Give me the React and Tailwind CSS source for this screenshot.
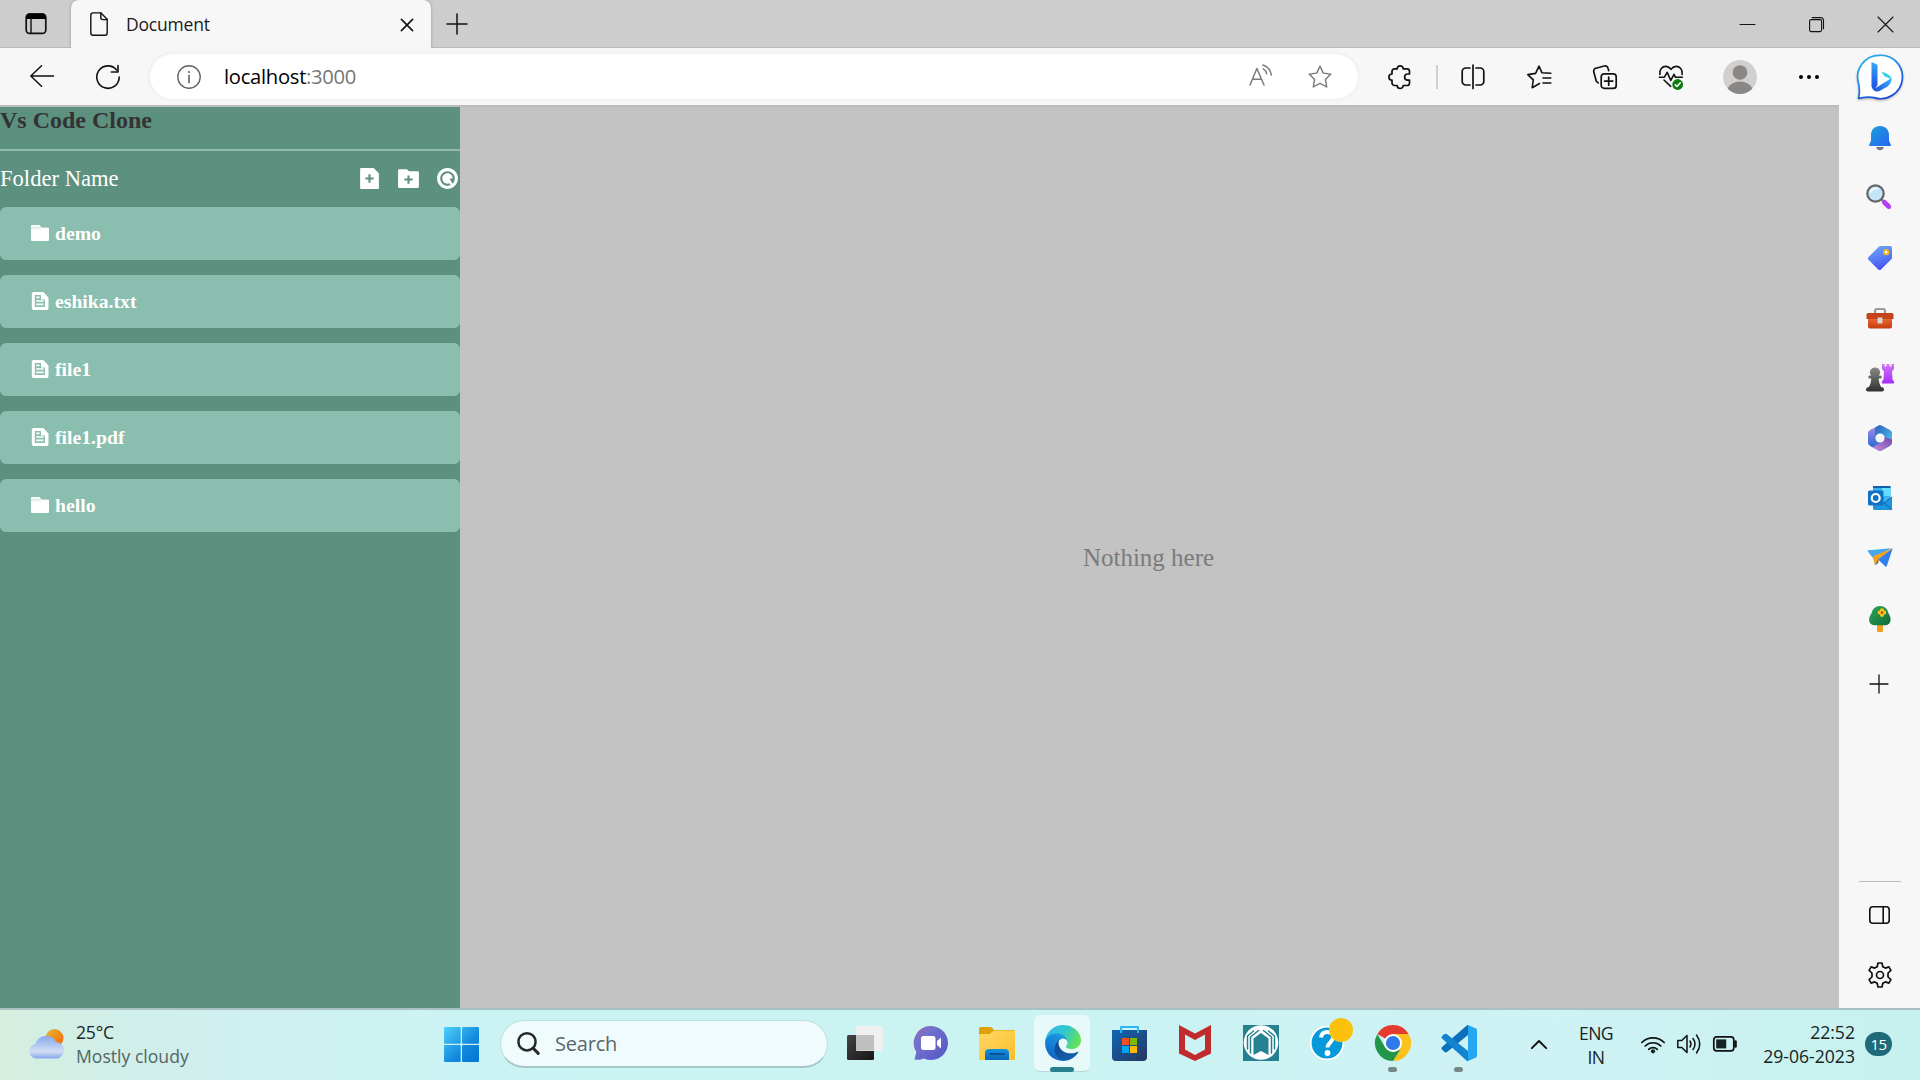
import React from "react";
import { RiFileAddFill, RiFolderAddFill, RiRestartFill } from "react-icons/ri";

const ui = "font-['Open_Sans','Noto_Sans',sans-serif]";
const serif = "font-['Liberation_Serif','Times_New_Roman',serif]";

function Ico({ s = 24, w, h, vb, sw = 1.3, c = "#111", children, className = "" }) {
  const W = w || s;
  const H = h || s;
  return (
    <svg
      width={W}
      height={H}
      viewBox={vb || `0 0 ${W} ${H}`}
      fill="none"
      stroke={c}
      strokeWidth={sw}
      strokeLinecap="round"
      strokeLinejoin="round"
      className={"block shrink-0 overflow-visible " + className}
    >
      {children}
    </svg>
  );
}

/* ---------- tab strip ---------- */
function TabStrip() {
  return (
    <div className="flex h-12 shrink-0 items-end bg-[#cdcdcd] shadow-[inset_0_-1px_0_#b9b9b9]">
      <div className="flex h-12 w-[71px] items-center pl-[25px]">
        <Ico w={22} h={22} sw={1.7}>
          <rect x="1.2" y="1.2" width="19.6" height="19.2" rx="3.4" />
          <path d="M1 6V4a3.5 3.5 0 0 1 3.5-3.5h13A3.5 3.5 0 0 1 21 4v2z" fill="#000" stroke="none" />
          <path d="M6 6v14" strokeWidth="1.4" />
        </Ico>
      </div>
      <div className="flex h-12 w-[360px] items-center rounded-t-[8px] bg-[#f7f7f7] pl-[19px] pr-[18px] shadow-[0_0_3px_rgba(0,0,0,0.3)] [clip-path:inset(-1px_-4px_0_-4px)]">
        <Ico w={18} h={24} sw={1.4}>
          <path d="M3 .9h8l6.2 6.4V21a2.2 2.2 0 0 1-2.2 2.2H3A2.2 2.2 0 0 1 .8 21V3.1A2.2 2.2 0 0 1 3 .9z" />
          <path d="M10.8 1v4.6c0 1.2.8 2 2 2h4.2" />
        </Ico>
        <div className={ui + " ml-[18px] flex-1 text-[17.5px] tracking-[-0.2px] text-[#1b1b1b]"}>Document</div>
        <Ico w={12} h={12} sw={1.6} className="mt-px">
          <path d="M.4.4l11.2 11.2M11.6.4L.4 11.6" />
        </Ico>
      </div>
      <div className="flex h-12 flex-1 items-center pl-[16px]">
        <Ico w={20} h={20} sw={1.5} className="-mt-px">
          <path d="M10 0v20M0 10h20" />
        </Ico>
      </div>
      <div className="flex h-12 items-center pr-[27px]">
        <Ico w={15} h={15} sw={1.1}><path d="M0 7.5h15" /></Ico>
        <Ico w={15} h={15} sw={1.1} className="ml-[54px]">
          <rect x=".6" y="2.6" width="12" height="12" rx="1.6" />
          <path d="M3.2.6h8.6a2.7 2.7 0 0 1 2.7 2.7v8.4" />
        </Ico>
        <Ico w={15} h={15} sw={1.1} className="ml-[54px]"><path d="M0 0l15 15M15 0L0 15" /></Ico>
      </div>
    </div>
  );
}

const STAR = "M12 1.2l3.3 6.9 7.5 1-5.4 5.3 1.3 7.6-6.7-3.6L5.3 22l1.3-7.6L1.2 9.1l7.5-1z";

function Slot({ children, w = "w-[66px]" }) {
  return <div className={"flex shrink-0 items-center justify-center " + w}>{children}</div>;
}

function Toolbar() {
  return (
    <div className="flex h-[57px] shrink-0 items-center bg-[#f7f7f7]">
      <div className="flex w-[150px] shrink-0 items-center pl-[9px]">
        <Slot>
          <Ico w={24} h={22} sw={1.5} className="-mt-px"><path d="M23.500 11H.8M11.500 .8L.8 11l10.700 10.200" /></Ico>
        </Slot>
        <Slot>
          <Ico w={24} h={24} sw={1.6}>
            <path d="M23.200 12A11.200 11.200 0 1 1 20.600 4.900" />
            <path d="M22 .6v6.400h-6.600" />
          </Ico>
        </Slot>
      </div>
      <div className="flex h-[45px] w-[1208px] shrink-0 items-center rounded-full bg-white pl-[27px] pr-[26px] shadow-[0_0_5px_rgba(0,0,0,0.07)]">
        <Ico s={24} c="#666" sw={1.4}>
          <circle cx="12" cy="12" r="11.2" />
          <path d="M12 10.500v7" strokeWidth="1.7" />
          <circle cx="12" cy="7" r="1.100" fill="#666" stroke="none" />
        </Ico>
        <div className={ui + " ml-[23px] flex-1 text-[20.2px] tracking-[-0.28px] text-black"}>
          localhost<span className="text-[#767676]">:3000</span>
        </div>
        <Ico w={24} h={22} c="#7a7a7a" sw={1.5} className="-mt-[3px] mr-[35px]">
          <path d="M1 21L7.900 4.500 15 21M3.600 15.300h8.700" />
          <path d="M14.300 4.800c1.800 1 3 2.800 3.300 5M13.800 1c4.400 1 7.400 4.700 8.600 10" strokeWidth="1.400" />
        </Ico>
        <Ico s={24} c="#767676" sw={1.4}><path d={STAR} /></Ico>
      </div>
      <div className="flex w-[80px] shrink-0 items-center pl-[31px]">
        <Ico w={22} h={24} sw={1.7}>
          <path d="M5.500 3.800H8.200a3 3 0 0 1 6 0H18a2.500 2.500 0 0 1 2.500 2.500V9h-1.800a3 3 0 0 0 0 6.200h1.800v2.800A2.500 2.500 0 0 1 18 20.500h-3.800a3 3 0 0 1-6 0H5.500A2.500 2.500 0 0 1 3 18v-2.800a3 3 0 0 1 0-6.200V6.300A2.500 2.500 0 0 1 5.500 3.800z" />
        </Ico>
        <div className="ml-[25px] h-6 w-[2px] bg-[#d0d0d0]" />
      </div>
      <div className="flex shrink-0 pl-[2px]">
        <Slot>
          <Ico w={24} h={24} sw={1.7}>
            <path d="M9 3H4.800A3.500 3.500 0 0 0 1.200 6.500v10A3.500 3.500 0 0 0 4.800 20H9M15 3h4.200a3.500 3.500 0 0 1 3.600 3.500v10a3.500 3.500 0 0 1-3.600 3.500H15M12 0v23.500" />
          </Ico>
        </Slot>
        <Slot>
          <Ico w={24} h={24} sw={1.6}>
            <path d="M12.500 18.500L5.200 22.700 6.300 14.900.8 9.600 8.600 8.400 12 1.200l3 6.600 8.800.4M16 13h7.800M16 18h7.800" />
          </Ico>
        </Slot>
        <Slot>
          <Ico w={24} h={24} sw={1.7}>
            <rect x="8.200" y="8.800" width="15" height="14.600" rx="3" />
            <path d="M15.700 12v8.200M11.600 16.100h8.200M15.700 5.600L15 3.200A3 3 0 0 0 11.300 1L3 3.200A3 3 0 0 0 .8 7l2.500 9.200 1.900 1.800" />
          </Ico>
        </Slot>
        <Slot>
          <Ico w={24} h={24} sw={1.600}>
            <path d="M.9 9.500C0 4.500 3.500 1.400 6.800 1.400c2.400 0 3.900 1.200 5.200 2.900 1.300-1.700 2.800-2.900 5.200-2.900 3.300 0 6.800 3.100 5.900 8.100M.4 12.300h4.800l3-5 3.600 8 3.200-6 1.600 3h6.800M5 15l6.700 6.300" />
            <circle cx="18.700" cy="19.500" r="5.400" fill="#107c10" stroke="none" />
            <path d="M16.200 19.800l1.700 1.700 3.400-3.700" stroke="#fff" strokeWidth="1.500" />
          </Ico>
        </Slot>
      </div>
      <div className="ml-[19px] flex shrink-0 items-center">
        <Ico s={34} sw={0}>
          <clipPath id="av"><circle cx="17" cy="17" r="17" /></clipPath>
          <circle cx="17" cy="17" r="17" fill="#d2d0ce" />
          <g clipPath="url(#av)" fill="#8a8886">
            <circle cx="17" cy="12.500" r="7.300" />
            <ellipse cx="17" cy="32" rx="13" ry="10.500" />
          </g>
        </Ico>
        <Ico w={20} h={4} sw={0} className="ml-[42px]">
          <g fill="#000"><circle cx="2" cy="2" r="2" /><circle cx="10" cy="2" r="2" /><circle cx="18" cy="2" r="2" /></g>
        </Ico>
        <Ico s={46} sw={0} className="ml-[38px] drop-shadow-[0_1px_1px_rgba(0,0,0,0.3)]">
          <defs>
            <linearGradient id="bb" x1="0" y1="0" x2=".6" y2="1"><stop offset="0" stopColor="#24c1ee" /><stop offset="1" stopColor="#1b48d8" /></linearGradient>
            <linearGradient id="b1" x1="0" y1="0" x2="0" y2="1"><stop offset="0" stopColor="#38a8fb" /><stop offset="1" stopColor="#1a4fe0" /></linearGradient>
            <linearGradient id="b2" x1="1" y1="0" x2="0" y2="1"><stop offset="0" stopColor="#37bdff" /><stop offset="1" stopColor="#1a44dc" /></linearGradient>
          </defs>
          <path d="M22.500 1.300a21.700 21.700 0 1 1-5.500 42.300c-4.500-1.200-8-.8-15.500.8C3.300 38 2.400 34 1.500 29A21.700 21.700 0 0 1 22.500 1.300z" fill="#fff" stroke="url(#bb)" strokeWidth="1.700" />
          <path d="M14.500 8l5 2.200c.8.400 1 1 1 1.800v19c-1.500 3-4 5.500-6 1z" fill="url(#b1)" />
          <path d="M14.500 31c.5 5.500 4 7.500 8 6l8-4.500c3-2 4-5 4-8.500l-15 9.500c-2 1.200-4 .5-5-2.500z" fill="url(#b2)" />
          <path d="M24.500 17.500c5 1.800 10.500 3.800 10.300 9.300-1.300-2.300-3.300-3-6.300-4-1.500-.6-2.500-2.500-4-5.300z" fill="#2fd0e8" />
        </Ico>
      </div>
    </div>
  );
}

/* ---------- file explorer ---------- */
function FileGlyph() {
  return (
    <Ico w={18} h={18} sw={0} className="ml-[31px] mr-[6px] -mt-[1px]">
      <path fill="#fff" fillRule="evenodd" d="M2.500 0h9.700L17.500 5.500v10.800A1.700 1.700 0 0 1 15.800 18H2.500A1.700 1.700 0 0 1 .8 16.300V1.700A1.700 1.700 0 0 1 2.500 0zM3.800 3v12h10.200V7.500h-4V3z" />
      <path d="M5.200 5.300H8.500M5.200 9h7.400M5.200 12.300h7.400" stroke="#fff" strokeWidth="1.700" strokeLinecap="butt" />
    </Ico>
  );
}
function FolderGlyph() {
  return (
    <Ico w={18} h={16} sw={0} className="ml-[31px] mr-[6px] -mt-[1px]">
      <path fill="#e3f0eb" d="M0 1a1 1 0 0 1 1-1h7.500l2 2.500H17a1 1 0 0 1 1 1V5H0z" />
      <path fill="#fff" d="M0 4.300h9.500l1-1.300H17a1 1 0 0 1 1 1v11a1 1 0 0 1-1 1H1a1 1 0 0 1-1-1z" />
      <path fill="#fff" d="M1 0h7.500l1.300 1.600H0V1a1 1 0 0 1 1-1z" />
    </Ico>
  );
}

const entries = [
  { name: "demo", folder: true },
  { name: "eshika.txt" },
  { name: "file1" },
  { name: "file1.pdf" },
  { name: "hello", folder: true },
];

function Explorer() {
  return (
    <div className={serif + " w-[460px] shrink-0 bg-[#5c9180]"}>
      <div className="h-[42px] text-[24px] font-bold leading-[27px] text-[#333]">Vs Code Clone</div>
      <div className="h-[2px] bg-[#93bcae]" />
      <div className="flex h-[56px] items-center text-white">
        <div className="flex-1 text-[22.6px]">Folder Name</div>
        <div className="-mt-px flex gap-[14px]">
          <RiFileAddFill size={25} />
          <RiFolderAddFill size={25} />
          <RiRestartFill size={25} />
        </div>
      </div>
      <div className="flex flex-col gap-[15px]">
        {entries.map((e) => (
          <div key={e.name} className="flex h-[53px] items-center rounded-[6px] bg-[#8abeae] text-[19.7px] font-bold text-white">
            {e.folder ? <FolderGlyph /> : <FileGlyph />}
            <span>{e.name}</span>
          </div>
        ))}
      </div>
    </div>
  );
}

/* ---------- browser side rail ---------- */
function Rail() {
  const row = "flex h-[60px] shrink-0 items-center justify-center";
  return (
    <div className="flex w-[81px] shrink-0 flex-col bg-[#f7f7f7] pt-[3px]">
      <svg width="0" height="0" className="absolute">
        <defs>
          <linearGradient id="bl" x1="0" y1="0" x2="1" y2="1"><stop offset="0" stopColor="#1ba0d8" /><stop offset="1" stopColor="#2766f5" /></linearGradient>
          <linearGradient id="tg" x1=".3" y1="0" x2=".6" y2="1"><stop offset="0" stopColor="#6ba6f8" /><stop offset="1" stopColor="#4351f2" /></linearGradient>
          <linearGradient id="or" x1="0" y1="0" x2="0" y2="1"><stop offset="0" stopColor="#ef6a2e" /><stop offset="1" stopColor="#c43a12" /></linearGradient>
          <linearGradient id="pw" x1="0" y1="0" x2="0" y2="1"><stop offset="0" stopColor="#8a8a8a" /><stop offset="1" stopColor="#303030" /></linearGradient>
          <linearGradient id="rk" x1="0" y1="0" x2="0" y2="1"><stop offset="0" stopColor="#d078fa" /><stop offset="1" stopColor="#a72bfb" /></linearGradient>
          <linearGradient id="tr" x1="0" y1="0" x2="1" y2="1"><stop offset="0" stopColor="#33a853" /><stop offset="1" stopColor="#0c6c3c" /></linearGradient>
          <linearGradient id="m1" x1="0" y1="0" x2="1" y2="1"><stop offset="0" stopColor="#2b5fb8" /><stop offset="1" stopColor="#4cc3f2" /></linearGradient>
          <linearGradient id="m2" x1="0" y1="0" x2="0" y2="1"><stop offset="0" stopColor="#a48be8" /><stop offset="1" stopColor="#2c6cd2" /></linearGradient>
          <linearGradient id="m3" x1="0" y1="1" x2="1" y2="0"><stop offset="0" stopColor="#c98be0" /><stop offset="1" stopColor="#6d4aa8" /></linearGradient>
        </defs>
      </svg>
      <div className={row}>
        <Ico w={22} h={24} sw={0}>
          <path d="M7 21h8c-.5 2-2 3.200-4 3.200S7.500 23 7 21z" fill="#777" />
          <path d="M11 0c5.500 0 9 3.800 9 9v5.500l1.900 4.500c.2.600-.2 1-.8 1H.9c-.6 0-1-.4-.8-1L2 14.500V9c0-5.200 3.500-9 9-9z" fill="url(#bl)" />
        </Ico>
      </div>
      <div className={row + " pb-[3px] pr-[2px]"}>
        <Ico w={25} h={25} sw={0}>
          <path d="M15.500 15.500l8 8" stroke="#8a8a8a" strokeWidth="3" />
          <path d="M18.500 18.500l4 3.800" stroke="#b83cf5" strokeWidth="5" />
          <circle cx="9.500" cy="9.500" r="8.200" fill="#c4e4f9" stroke="#666" strokeWidth="2.200" />
          <path d="M5 8a5.500 5.500 0 0 1 6-3.500" stroke="#fff" strokeWidth="1.500" />
        </Ico>
      </div>
      <div className={row}>
        <Ico w={24} h={24} sw={0}>
          <path d="M12.500 0H22a2 2 0 0 1 2 2v9.500c0 .7-.2 1.200-.7 1.700L13 23.400a2 2 0 0 1-2.800 0l-9.600-9.600a2 2 0 0 1 0-2.800L11 .6C11.400.2 11.900 0 12.500 0z" fill="url(#tg)" />
          <circle cx="18.200" cy="6.200" r="2.300" fill="#fff" stroke="#e6b423" strokeWidth="1.900" />
        </Ico>
      </div>
      <div className={row}>
        <Ico w={28} h={21} sw={0}>
          <path d="M9 6V3a2 2 0 0 1 2-2h6a2 2 0 0 1 2 2v3" stroke="#999" strokeWidth="2.200" />
          <path d="M2 10h24v8.500a2 2 0 0 1-2 2H4a2 2 0 0 1-2-2z" fill="url(#or)" />
          <path d="M2 5h24a1.500 1.500 0 0 1 1.500 1.500V11H.5V6.500A1.500 1.500 0 0 1 2 5z" fill="#c4431a" />
          <rect x="11.500" y="9.500" width="5" height="6" rx="1" fill="#d6d6d6" />
        </Ico>
      </div>
      <div className={row}>
        <Ico w={28} h={28} sw={0}>
          <path d="M16 0h2.500v2.500h2V0h3v2.500h2V0H28v4.500c0 1.500-1.500 2-2 3l.5 8 1.500 2c.5 1.500 0 2-1 2H17c-1 0-1.500-.5-1-2l1.500-2 .5-8c-.5-1-2-1.500-2-3z" fill="url(#rk)" />
          <path d="M9 3.500a4.700 4.700 0 0 1 3.700 8h1.500a1.500 1.500 0 0 1 0 3h-1.500c.2 3.500 1 6 2.300 8.500 2 .2 3 1.200 3 2.500s-.8 2-2 2H2c-1.200 0-2-.7-2-2s1-2.300 3-2.500c1.300-2.500 2.100-5 2.300-8.500H3.800a1.500 1.500 0 0 1 0-3h1.500A4.700 4.700 0 0 1 9 3.500z" fill="url(#pw)" />
        </Ico>
      </div>
      <div className={row}>
        <Ico w={24} h={26} sw={0}>
          <path d="M14 .9l8 4.400a4 4 0 0 1 2 3.500v8.400a4 4 0 0 1-2 3.500l-8 4.600a4 4 0 0 1-4 0l-8-4.600a4 4 0 0 1-2-3.500V8.800a4 4 0 0 1 2-3.500L10 .9a4 4 0 0 1 4 0z" fill="#3f78d6" />
          <path d="M10 .9L2 5.300A4 4 0 0 0 0 8.800v8.400a4 4 0 0 0 2 3.500l2.500 1.500L9 19.500c-1-1-1.700-2-1.700-3.500V2.500z" fill="url(#m2)" />
          <path d="M7.300 11V2.700L10 .9a4 4 0 0 1 4 0l8 4.400a4 4 0 0 1 2 3.500v8L16 12z" fill="url(#m1)" />
          <path d="M24 14.500v2.700a4 4 0 0 1-2 3.500l-8 4.600a4 4 0 0 1-4 0L4.500 22.300 14 17l2.300-5z" fill="url(#m3)" />
          <circle cx="12" cy="13" r="4.600" fill="#f7f7f7" />
        </Ico>
      </div>
      <div className={row}>
        <Ico w={24} h={24} sw={0}>
          <rect x="5" y="0" width="17.500" height="22" rx="1.200" fill="#37b3ee" />
          <path d="M5 0h17.500v2H5z" fill="#1160ad" />
          <path d="M14 2h8.500v8H14z" fill="#62dcfc" />
          <path d="M5 11.500l11 6 8-6.500v11.500a1.500 1.500 0 0 1-1.500 1.500H6.500A1.500 1.500 0 0 1 5 22.500z" fill="#1c96dc" />
          <path d="M16 17l8-6M16 17l8 6.500" stroke="#0d5ca8" strokeWidth="1" />
          <rect x="0" y="4.500" width="15.500" height="15" rx="1.500" fill="#0f72c6" />
          <circle cx="7.700" cy="12" r="4" stroke="#fff" strokeWidth="2.200" />
        </Ico>
      </div>
      <div className={row + " pb-px"}>
        <Ico w={26} h={19} sw={0}>
          <path d="M.5 3Q0 2.500 1 2.300L25 .3 6 10z" fill="#43a8ee" />
          <path d="M25.500.3L5.500 8.500 8 17.500l3.800-5z" fill="#f4a51d" />
          <path d="M8 17.500l3.500-3-.5-3z" fill="#3a62a8" />
          <path d="M25.800.3L11 11.500l7.500 7c.5.4 1 .2 1.200-.3z" fill="#347ff0" />
        </Ico>
      </div>
      <div className={row + " pt-[2px]"}>
        <Ico w={22} h={26} sw={0}>
          <rect x="8" y="18" width="6" height="8" rx="1" fill="#eda022" />
          <path d="M11 0c4.500 0 8 3.500 8.500 7.500 1.500 2 2.300 4.500 2 7-.3 3-2.500 4.700-5.500 4.700H6c-3.500 0-5.500-1.700-5.900-4.700-.2-2.500.8-5 2.400-7C3 3.500 6.500 0 11 0z" fill="url(#tr)" />
          <g fill="#fbc51c"><circle cx="13" cy="4.300" r="2" /><circle cx="13" cy="8.900" r="2" /><circle cx="10.700" cy="6.600" r="2" /><circle cx="15.300" cy="6.600" r="2" /></g>
          <circle cx="13" cy="6.600" r="1.300" fill="#c8421c" />
        </Ico>
      </div>
      <div className="flex h-[70px] items-center justify-center pr-0.5 pt-px">
        <Ico s={18} sw={1.3}><path d="M9 0v18M0 9h18" /></Ico>
      </div>
      <div className="flex-1" />
      <div className="mx-auto h-[1px] w-[42px] bg-[#bbb]" />
      <div className="flex h-[66px] items-center justify-center">
        <Ico w={21} h={18} sw={1.6}>
          <rect x=".8" y=".8" width="19.400" height="16.400" rx="3" />
          <path d="M14.200 1v16" />
        </Ico>
      </div>
      <div className="flex h-[60px] items-start justify-center pt-[14px]">
        <Ico w={24} h={26} sw={1.7}>
          <path d="M10 1h4l.8 3.700 2.500 1.400 3.600-1.200 2 3.500-2.800 2.600q-.3 2 0 4l2.800 2.600-2 3.500-3.600-1.200-2.500 1.400L14 25h-4l-.8-3.700-2.500-1.400-3.600 1.200-2-3.500L3.900 15q.3-2 0-4L1.100 8.400l2-3.500 3.600 1.200 2.500-1.400z" />
          <circle cx="12" cy="13" r="3.500" />
        </Ico>
      </div>
    </div>
  );
}

/* ---------- taskbar ---------- */
function TaskIcon({ children, active, dot }) {
  return (
    <div className="relative flex h-full w-[66px] items-center justify-center">
      {active && (
        <div className="absolute left-[4px] top-[6px] h-[57px] w-[56px] rounded-[6px] border-b border-[#b8d6d6] bg-[#e8f9f9]">
          <div className="absolute bottom-[-1px] left-[16px] h-[5px] w-6 rounded-full bg-[#26808f]" />
        </div>
      )}
      {dot && <div className="absolute left-[28px] top-[58px] h-[5px] w-[9px] rounded-full bg-[#758888]" />}
      <div className="relative">{children}</div>
    </div>
  );
}

function Taskbar() {
  return (
    <div className="flex h-[72px] shrink-0 items-center border-t-2 border-[#a8c0c2] bg-[linear-gradient(90deg,#d5efdf_0px,#d0efea_130px,#d0f0f1_250px,#ccf3f3_450px,#caf3f2_1000px,#cff2f4_1560px,#c6f1ee_1920px)] pb-[2px]">
      <div className={ui + " flex w-[436px] items-center pl-[28px]"}>
        <Ico w={38} h={32} sw={0}>
          <defs>
            <linearGradient id="sun" x1="0" y1="0" x2="1" y2="1"><stop offset="0" stopColor="#e9b92f" /><stop offset="1" stopColor="#f2660f" /></linearGradient>
            <linearGradient id="cl" x1="0" y1="0" x2="0" y2="1"><stop offset="0" stopColor="#86a8ec" /><stop offset=".7" stopColor="#d2def5" /><stop offset="1" stopColor="#84a5ea" /></linearGradient>
          </defs>
          <circle cx="26.500" cy="10" r="9" fill="url(#sun)" />
          <path d="M8 30.500a7.300 7.300 0 0 1-.5-14.500A11 11 0 0 1 28 14 8.300 8.300 0 0 1 29 30.500z" fill="url(#cl)" />
        </Ico>
        <div className="ml-[10px] text-[17.6px] leading-6">
          <div className="tracking-[-0.2px] text-[#1a2524]">25°C</div>
          <div className="text-[#546463]">Mostly cloudy</div>
        </div>
      </div>
      <div className="flex w-[64px] items-center pl-2">
        <Ico s={35} sw={0}>
          <defs><linearGradient id="wn" gradientUnits="userSpaceOnUse" x1="0" y1="0" x2="35" y2="35"><stop offset="0" stopColor="#4fd0fb" /><stop offset=".6" stopColor="#1289de" /><stop offset="1" stopColor="#0273d2" /></linearGradient></defs>
          <g fill="url(#wn)"><rect width="16.700" height="16.700" rx="1" /><rect x="18" width="17" height="16.700" rx="1" /><rect y="18" width="16.700" height="17" rx="1" /><rect x="18" y="18" width="17" height="17" rx="1" /></g>
        </Ico>
      </div>
      <div className="flex h-[48px] w-[328px] items-center rounded-full border border-b-2 border-[#bfe0e0] border-b-[#a5c8c9] bg-[#effbfc] pl-[16px]">
        <Ico w={23} h={23} c="#282828" sw={2.500}>
          <circle cx="10" cy="9.800" r="8.600" /><path d="M16.200 16.200l5 5.200" strokeWidth="3" />
        </Ico>
        <div className={ui + " ml-[15px] pt-px text-[20px] tracking-[-0.2px] text-[#5b6666]"}>Search</div>
      </div>
      <div className="flex h-[70px] w-[664px] pb-[2px] pl-[4px]">
        <TaskIcon>
          <Ico w={36} h={34} sw={0}>
            <defs>
              <linearGradient id="tv" x1="0" y1="0" x2="1" y2="1"><stop offset="0" stopColor="#444" /><stop offset="1" stopColor="#161616" /></linearGradient>
            </defs>
            <rect x="0" y="9" width="27" height="25" rx="1.500" fill="url(#tv)" />
            <rect x="9" y="0" width="27" height="25" rx="1.500" fill="#f0f0f0" />
            <path d="M9 9h18v15.500H9z" fill="#bfbfbf" />
          </Ico>
        </TaskIcon>
        <TaskIcon>
          <Ico s={34} sw={0}>
            <defs><linearGradient id="ch" x1="0" y1="0" x2="1" y2=".8"><stop offset="0" stopColor="#9866b4" /><stop offset=".35" stopColor="#7272cc" /><stop offset="1" stopColor="#5658c8" /></linearGradient></defs>
            <path d="M17 0a17 17 0 1 1-7 32.500C7 33.800 3.500 34 .5 33.500L2.300 26A17 17 0 0 1 17 0z" fill="url(#ch)" />
            <rect x="7" y="10" width="14.500" height="14" rx="2.500" fill="#fff" />
            <path d="M23 15l4-3.500v11L23 19z" fill="#fff" />
          </Ico>
        </TaskIcon>
        <TaskIcon>
          <Ico w={36} h={33} sw={0}>
            <defs>
              <linearGradient id="fo" x1="0" y1="0" x2="1" y2="1"><stop offset="0" stopColor="#ffd766" /><stop offset="1" stopColor="#fbc02a" /></linearGradient>
              <linearGradient id="fb" x1="0" y1="0" x2="0" y2="1"><stop offset="0" stopColor="#1492e2" /><stop offset="1" stopColor="#0a66b8" /></linearGradient>
            </defs>
            <path d="M0 1.500Q0 0 1.500 0h10Q13 0 15 3h19.500Q36 3 36 4.500V7H0z" fill="#e0a008" />
            <path d="M0 7h10.500L15 3.500h21V31.500q0 1.500-1.500 1.500h-33Q0 33 0 31.500z" fill="url(#fo)" />
            <path d="M6 33v-7a4 4 0 0 1 4-4h16a4 4 0 0 1 4 4v7z" fill="url(#fb)" />
            <path d="M11 27h14" stroke="#0a5294" strokeWidth="2" />
          </Ico>
        </TaskIcon>
        <TaskIcon active>
          <Ico s={36} vb="0 0 256 256" sw={0}>
            <defs>
              <linearGradient id="e1" x1=".2" y1="0" x2="1" y2=".6"><stop offset="0" stopColor="#0f4a90" /><stop offset="1" stopColor="#1560b0" /></linearGradient>
              <linearGradient id="e2" x1=".7" y1="0" x2=".3" y2="1"><stop offset="0" stopColor="#1b9de2" /><stop offset=".5" stopColor="#1681d6" /><stop offset="1" stopColor="#0d5dbf" /></linearGradient>
              <linearGradient id="e3" x1="0" y1=".3" x2="1" y2=".6"><stop offset="0" stopColor="#35b8ee" /><stop offset=".5" stopColor="#30c6cf" /><stop offset="1" stopColor="#68e44e" /></linearGradient>
            </defs>
            <path fill="url(#e1)" d="M231 190.500c-3.400 1.800-6.900 3.400-10.500 4.700a101.800 101.800 0 0 1-35.900 6.500c-47.300 0-88.500-32.500-88.500-74.300 0-11.400 6.400-21.900 16.400-27.300-42.800 1.800-53.800 46.400-53.800 72.500 0 74 68.100 81.400 82.800 81.400 7.900 0 19.800-2.300 27-4.600l1.300-.4a128.300 128.300 0 0 0 66.600-52.800 4 4 0 0 0-5.400-5.700z" />
            <path fill="url(#e2)" d="M105.700 241.400a79.200 79.200 0 0 1-22.700-21.300 80.700 80.700 0 0 1 29.500-120c3.200-1.500 8.500-4.100 15.600-4a32.400 32.400 0 0 1 25.700 13 31.900 31.900 0 0 1 6.300 18.700c0-.2 24.500-79.600-80-79.600-43.900 0-80 41.600-80 78.200a130.200 130.200 0 0 0 12.100 56 128 128 0 0 0 156.400 67 75.500 75.500 0 0 1-62.800-8z" />
            <path fill="url(#e3)" d="M152.300 148.900c-.9 1-3.400 2.500-3.400 5.600 0 2.600 1.700 5.200 4.800 7.300 14.300 10 41.400 8.600 41.500 8.600a59.600 59.600 0 0 0 30.300-8.300 61.400 61.400 0 0 0 30.400-52.900c.3-22.400-8-37.300-11.300-43.900C223.500 23.900 177.700 0 128 0A128 128 0 0 0 0 126.200c.5-36.500 36.800-66 80-66 3.500 0 23.500.3 42 10a72.600 72.600 0 0 1 30.900 29.300c6.100 10.600 7.200 24.100 7.200 29.500s-2.700 13.300-7.800 19.900z" />
          </Ico>
        </TaskIcon>
        <TaskIcon>
          <Ico w={35} h={35} sw={0}>
            <defs><linearGradient id="st" x1="0" y1="0" x2="1" y2="1"><stop offset="0" stopColor="#1166b8" /><stop offset="1" stopColor="#27365e" /></linearGradient></defs>
            <path d="M9 5.500V1h17v4.500" stroke="#2eb6ee" strokeWidth="2" />
            <path d="M0 4h35v27a4 4 0 0 1-4 4H4a4 4 0 0 1-4-4z" fill="url(#st)" />
            <path d="M8 4h2v3H8zM25 4h2v3h-2z" fill="#2eb6ee" />
            <path d="M10 12h7v7h-7z" fill="#f25022" /><path d="M18 12h7v7h-7z" fill="#7fba00" />
            <path d="M10 20h7v7h-7z" fill="#00a4ef" /><path d="M18 20h7v7h-7z" fill="#ffb900" />
          </Ico>
        </TaskIcon>
        <TaskIcon>
          <Ico w={32} h={36} sw={0}>
            <path d="M0 0l16 8.500L32 0v28.500L16 36 0 28.500zM6 9.500V24.500l10 5.500 10-5.500v-15L16 15z" fill="#c12b2e" fillRule="evenodd" />
          </Ico>
        </TaskIcon>
        <TaskIcon>
          <Ico s={36} sw={0}>
            <path d="M0 0h36v36H0z" fill="#25808f" />
            <circle cx="18" cy="17.500" r="17.300" fill="#fff" />
            <path d="M10.500 13.500L18 8l7.500 5.500V30L18 26l-7.500 4z" fill="#25808f" />
            <path d="M7.500 28V12l8-6.500M4.500 24V11l6-5M28.500 28V12l-8-6.500M31.500 24V11l-6-5" stroke="#25808f" strokeWidth="1.500" />
          </Ico>
        </TaskIcon>
        <TaskIcon>
          <Ico w={36} h={36} sw={0}>
            <circle cx="18" cy="18" r="16.300" fill="#0599d9" stroke="#fff" strokeWidth="1.800" />
            <path d="M12 12.500c.5-4 3-5.500 6.200-5.500 3.800 0 6 2.300 6 5.300 0 4.700-5.700 5.200-5.700 10.200" stroke="#fff" strokeWidth="4" strokeLinecap="butt" />
            <circle cx="18.500" cy="28" r="2.900" fill="#fff" />
            <circle cx="32" cy="5" r="12" fill="#fcc10d" />
          </Ico>
        </TaskIcon>
        <TaskIcon dot>
          <Ico s={36} sw={0}>
            <path d="M18 18L2.400 9A18 18 0 0 1 33.600 9z" fill="#e33b2e" />
            <path d="M18 9h15.600A18 18 0 0 1 18 36l7.800-13.500z" fill="#fcc21c" />
            <path d="M2.400 9l7.800 13.500L18 27l7.300-2.500L18 36A18 18 0 0 1 2.400 9z" fill="#219648" />
            <circle cx="18" cy="18" r="9" fill="#fff" />
            <circle cx="18" cy="18" r="7.100" fill="#3079ea" />
          </Ico>
        </TaskIcon>
        <TaskIcon dot>
          <Ico s={36} sw={0}>
            <path d="M1 22L25.500.7Q26.500-.2 27 0v10L6 27q-1.500 1-3-.5l-2-2q-1.200-1.500 0-2.500z" fill="#0a70bd" />
            <path d="M6 9.200L27 26v10q-.8.200-1.500-.5L1 13.500q-1-1.200 0-2.300l2-2q1.500-1 3 0z" fill="#1384cf" />
            <path d="M27 0l8 3.500q1 .5 1 1.800v25.400q0 1.300-1 1.800L27 36z" fill="#24a7f2" />
          </Ico>
        </TaskIcon>
      </div>
      <div className={ui + " flex shrink-0 items-center text-[17.6px] leading-6 text-[#152323]"}>
        <Ico w={16} h={9} sw={1.900} className="ml-[39px]"><path d="M.8 8.200L8 1l7.200 7.200" /></Ico>
        <div className="ml-[20px] w-[58px] pt-[2px] text-center tracking-[-0.6px]">ENG<br />IN</div>
        <Ico w={24} h={17} sw={1.700} className="ml-[16px]">
          <path d="M.8 6.500a15.800 15.800 0 0 1 22.400 0M4.200 10a11 11 0 0 1 15.600 0M7.700 13.300a6.200 6.200 0 0 1 8.600 0" />
          <circle cx="12" cy="15.300" r="2.100" fill="#152323" stroke="none" />
        </Ico>
        <Ico w={24} h={20} sw={1.500} className="ml-[12px]">
          <path d="M.8 6.500h4L10 1.500v17l-5.200-5h-4zM13 7q2 3 0 6M16 4.500q4 5.500 0 11M19.500 1q6.500 9 0 18" />
        </Ico>
        <Ico w={24} h={16} sw={1.700} className="ml-[12px]">
          <rect x=".8" y=".9" width="20" height="14" rx="2.800" />
          <path d="M22.500 5.500v5" strokeWidth="2.600" />
          <rect x="3.200" y="3.400" width="10" height="9" fill="#152323" stroke="none" />
        </Ico>
        <div className="ml-[16px] w-[102px] text-right">22:52<br />29-06-2023</div>
        <div className="ml-[10px] flex h-6 w-[27px] items-center justify-center rounded-full bg-[#1f6a78] text-[15px] tracking-[-0.5px] text-white">15</div>
      </div>
    </div>
  );
}

export default function App() {
  return (
    <div className="flex h-[1080px] w-[1920px] flex-col overflow-hidden bg-[#f7f7f7]">
      <TabStrip />
      <Toolbar />
      <div className="flex min-h-0 flex-1">
        <div className="flex flex-1 border-t-2 border-[#babbbb] bg-[#c2c3c2]">
          <Explorer />
          <div className={serif + " flex flex-1 items-center justify-center pr-[2px] text-[25px] text-[#7b7b7b]"}>Nothing here</div>
        </div>
        <Rail />
      </div>
      <Taskbar />
    </div>
  );
}
